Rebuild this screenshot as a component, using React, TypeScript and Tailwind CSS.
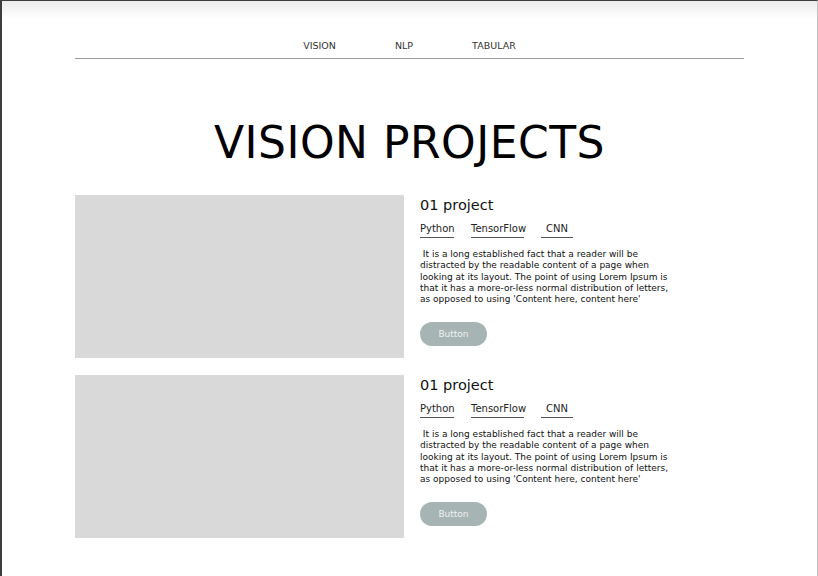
import React from "react";

const para = [
  "\u00a0It is a long established fact that a reader will be",
  "distracted by the readable content of a page when",
  "looking at its layout. The point of using Lorem Ipsum is",
  "that it has a more-or-less normal distribution of letters,",
  "as opposed to using 'Content here, content here'",
];

function Card() {
  return (
    <div className="flex gap-[16px]">
      <div className="w-[329px] h-[163px] bg-[#d9d9d9] shrink-0" />
      <div className="flex flex-col pt-[1px]">
        <div className="text-[14.5px] leading-[18px] text-[#111]">01 project</div>
        <div className="flex gap-[17px] mt-[9px] text-[10px] leading-[12px] text-[#222]">
          <span className="w-[34px] border-b border-[#555] pb-[2px]">Python</span>
          <span className="w-[53px] border-b border-[#555] pb-[2px]">TensorFlow</span>
          <span className="w-[32px] border-b border-[#555] pb-[2px] text-center">CNN</span>
        </div>
        <div className="mt-[11px] text-[9px] leading-[11.3px] text-[#111] whitespace-nowrap">
          {para.map((l, i) => (
            <div key={i}>{l}</div>
          ))}
        </div>
        <button className="mt-[17px] w-[67px] h-[24px] rounded-full bg-[#a6b4b4] text-[9px] text-[#eef2f2]">
          Button
        </button>
      </div>
    </div>
  );
}

export default function App() {
  return (
    <div
      className="relative w-[818px] h-[576px] bg-white border-t border-t-[#3d3d3d] border-l-2 border-l-[#3d3d3d] border-r border-r-[#c4c4c4] overflow-hidden"
      style={{ fontFamily: "'DejaVu Sans', 'Noto Sans', sans-serif" }}
    >
      <div className="absolute top-0 left-0 right-0 h-[18px] bg-gradient-to-b from-[#ececec] to-white" />
      <div className="relative ml-[73px] w-[669px]">
        <nav className="flex justify-center gap-[59px] pt-[39px] pb-[7px] border-b-[1.5px] border-[#9c9c9c] text-[9.5px] leading-[11px] text-[#333]">
          <span>VISION</span>
          <span>NLP</span>
          <span>TABULAR</span>
        </nav>
        <h1 className="text-center text-[44px] leading-[50px] text-black mt-[59px] tracking-[0.5px]">
          VISION PROJECTS
        </h1>
        <div className="flex flex-col gap-[17px] mt-[27px]">
          <Card />
          <Card />
        </div>
      </div>
    </div>
  );
}
